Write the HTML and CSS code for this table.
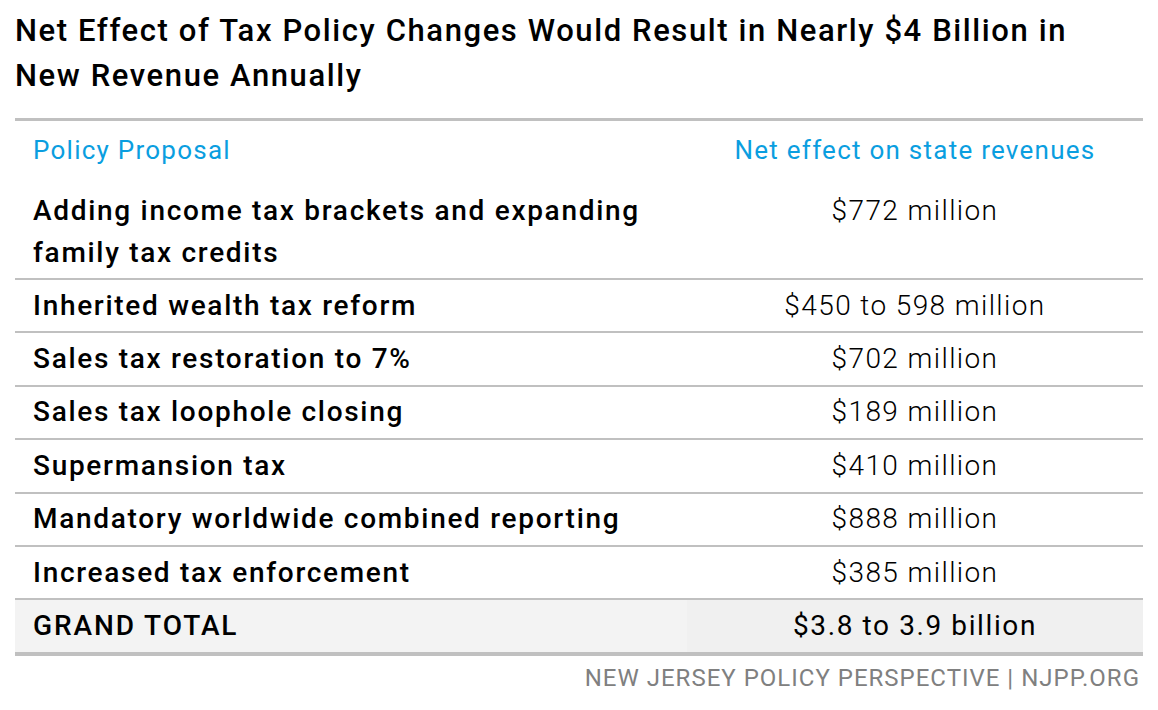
FILE: index.html
```html
<!DOCTYPE html>
<html>
<head>
<meta charset="utf-8">
<link rel="stylesheet" href="styles.css">
</head>
<body>
<div class="page">
  <h1 class="title">Net Effect of Tax Policy Changes Would Result in Nearly $4 Billion in New Revenue Annually</h1>
  <table class="tbl">
    <thead>
      <tr class="head">
        <th class="c1">Policy Proposal</th>
        <th class="c2">Net effect on state revenues</th>
      </tr>
    </thead>
    <tbody>
      <tr class="first">
        <td class="c1">Adding income tax brackets and expanding family tax credits</td>
        <td class="c2">$772 million</td>
      </tr>
      <tr><td class="c1">Inherited wealth tax reform</td><td class="c2">$450 to 598 million</td></tr>
      <tr><td class="c1">Sales tax restoration to 7%</td><td class="c2">$702 million</td></tr>
      <tr><td class="c1">Sales tax loophole closing</td><td class="c2">$189 million</td></tr>
      <tr><td class="c1">Supermansion tax</td><td class="c2">$410 million</td></tr>
      <tr><td class="c1">Mandatory worldwide combined reporting</td><td class="c2">$888 million</td></tr>
      <tr><td class="c1">Increased tax enforcement</td><td class="c2">$385 million</td></tr>
      <tr class="total"><td class="c1">GRAND TOTAL</td><td class="c2">$3.8 to 3.9 billion</td></tr>
    </tbody>
  </table>
  <div class="source">NEW JERSEY POLICY PERSPECTIVE | NJPP.ORG</div>
</div>
</body>
</html>
```

FILE: styles.css
```css
html, body {
  margin: 0;
  padding: 0;
  background: #ffffff;
}
body {
  font-family: Roboto, "Liberation Sans", sans-serif;
  color: #000;
}
.page {
  padding: 8px 15px 0 15px;
  width: 1128px;
}
.title {
  margin: 0;
  font-size: 31px;
  font-weight: 500;
  line-height: 45px;
  width: 1090px;
  letter-spacing: 1.6px;
}
.tbl {
  margin-top: 20px;
  width: 1128px;
  border-collapse: collapse;
  border-top: 3px solid #c0c0c0;
  border-bottom: 4px solid #c0c0c0;
}
.tbl th, .tbl td {
  padding: 0;
  vertical-align: middle;
}
.tbl .c1 {
  text-align: left;
  padding-left: 18px;
  width: 654px;
}
.tbl .c2 {
  text-align: center;
}
.head th {
  color: #0a9ee0;
  font-weight: 400;
  font-size: 26px;
  height: 58px;
  letter-spacing: 1.25px;
}
tbody td {
  font-size: 28px;
  height: 51.4px;
  line-height: 42px;
  border-top: 2px solid #c0c0c0;
}
tbody td.c1 {
  font-weight: 500;
  letter-spacing: 1.7px;
}
tbody td.c2 {
  font-weight: 300;
  letter-spacing: 1.4px;
}
tbody tr.first td {
  border-top: none;
  height: 88px;
  vertical-align: top;
  padding-top: 11px;
}
tbody tr.first td.c1 {
  width: 620px;
  padding-right: 34px;
}
tr.total td {
  background: #f3f3f3;
  font-weight: 500;
}
tr.total td.c1 {
  letter-spacing: 1.9px;
}
tr.total td.c2 {
  background: #f0f0f0;
  font-weight: 400;
  letter-spacing: 1.6px;
}
.source {
  text-align: right;
  color: #808080;
  font-size: 24px;
  letter-spacing: 1px;
  padding-right: 3px;
  margin-top: 8px;
}
```
